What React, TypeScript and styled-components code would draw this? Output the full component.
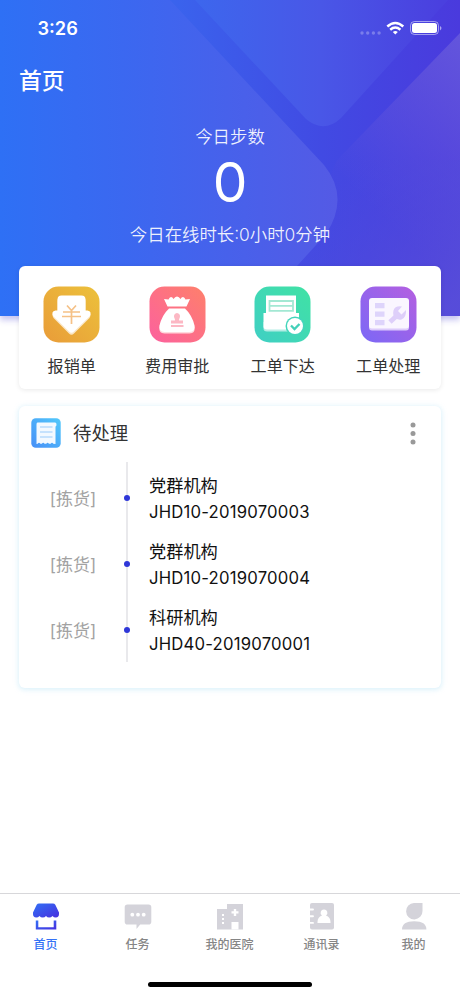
import React from 'react';
import styled, { createGlobalStyle } from 'styled-components';

const GlobalStyle = createGlobalStyle`
  * { box-sizing: border-box; }
  body {
    margin: 0;
    background: #fff;
    font-family: Inter, "Noto Sans CJK SC", sans-serif;
    color: #111;
  }
`;

const Screen = styled.div`
  display: flex;
  flex-direction: column;
  width: 460px;
  height: 996px;
  overflow: hidden;
  background: #fff;
`;

const Hero = styled.header`
  position: relative;
  flex: none;
  height: 316px;
  color: #fff;
  box-shadow: 0 4px 6px rgba(80, 70, 210, 0.32);
`;

const HeroArt = styled.svg`
  position: absolute;
  inset: 0;
  display: block;
`;

const HeroContent = styled.div`
  position: relative;
  display: flex;
  flex-direction: column;
`;

const StatusBar = styled.div`
  display: flex;
  align-items: center;
  justify-content: space-between;
  height: 57px;
  padding: 0 17px 0 37.5px;
`;

const Clock = styled.span`
  margin-top: -2px;
  font-size: 18.2px;
  font-weight: 600;
  line-height: 24px;
`;

const PageTitle = styled.h1`
  margin: 8px 0 0 19px;
  font-size: 22.8px;
  font-weight: 500;
  line-height: 32px;
`;

const Stats = styled.div`
  display: flex;
  flex-direction: column;
  align-items: center;
  padding-top: 27px;
`;

const StatLine = styled.div`
  font-size: 17.4px;
  font-weight: 350;
  line-height: 26px;
  color: rgba(255, 255, 255, 0.92);
  white-space: nowrap;
`;

const StepCount = styled.div`
  margin: 2px 0 9px;
  font-size: 55px;
  font-weight: 400;
  line-height: 61px;
`;

const Card = styled.section`
  position: relative;
  flex: none;
  width: 422px;
  margin: 0 auto;
  border-radius: 6px;
  background: #fff;
`;

const ShortcutCard = styled(Card)`
  display: grid;
  grid-template-columns: repeat(4, 105.5px);
  height: 123px;
  margin-top: -50px;
  padding-top: 19.5px;
  box-shadow: 0 1px 5px rgba(0, 0, 0, 0.09);
`;

const Shortcut = styled.div`
  display: flex;
  flex-direction: column;
  align-items: center;
  gap: 11px;
  font-size: 16.1px;
  line-height: 24px;
  color: #333;
  svg { display: block; }
`;

const TodoCard = styled(Card)`
  height: 282px;
  margin-top: 17px;
  box-shadow: 0 1px 5px 1px rgba(160, 218, 245, 0.36);
`;

const CardHeader = styled.div`
  display: flex;
  align-items: center;
  height: 54px;
  padding: 0 23px 0 12px;
`;

const CardTitle = styled.h2`
  flex: 1;
  margin: -1px 0 0 12px;
  font-size: 18.4px;
  font-weight: 400;
  line-height: 28px;
  color: #333;
`;

const Timeline = styled.div`
  display: flex;
  flex-direction: column;
  height: 203px;
  margin-top: 2px;
  padding-top: 3px;
  background: linear-gradient(#e9e9ec, #e9e9ec) 107px 0 / 2px 200px no-repeat;
`;

const TaskRow = styled.div`
  display: grid;
  grid-template-columns: 108px 22px 1fr;
  align-items: center;
  height: 66.2px;
`;

const TaskTag = styled.span`
  padding-top: 1px;
  text-align: center;
  font-size: 17px;
  line-height: 26px;
  color: #a2a2a2;
`;

const TaskDot = styled.span`
  width: 6px;
  height: 6px;
  margin-left: -3px;
  border-radius: 50%;
  background: #2f37d8;
`;

const TaskText = styled.div`
  padding-top: 2px;
  font-size: 17.2px;
  line-height: 26px;
  color: #111;
`;

const TaskNumber = styled.div`
  font-size: 16.7px;
  letter-spacing: 0.2px;
`;

const TabBar = styled.nav`
  display: grid;
  grid-template-columns: repeat(5, 92px);
  flex: none;
  height: 78px;
  margin-top: auto;
  margin-left: -0.5px;
  border-top: 1px solid #d7d7da;
  padding-top: 8px;
`;

const Tab = styled.div<{ $active?: boolean }>`
  display: flex;
  flex-direction: column;
  align-items: center;
  gap: 4px;
  font-size: 12px;
  font-weight: 500;
  line-height: 18px;
  color: ${({ $active }) => ($active ? '#3472f6' : '#858585')};
  svg { display: block; }
`;

const HomeArea = styled.div`
  display: flex;
  justify-content: center;
  flex: none;
  height: 25px;
  padding-top: 10.5px;
`;

const HomeIndicator = styled.div`
  width: 164px;
  height: 5px;
  border-radius: 3px;
  background: #000;
`;

const HeroBackground = () => (
  <HeroArt width="460" height="316" viewBox="0 0 460 316">
    <defs>
      <linearGradient id="base" x1="0" y1="0" x2="460" y2="0" gradientUnits="userSpaceOnUse">
        <stop offset="0" stopColor="#2e70f5" />
        <stop offset=".38" stopColor="#3a63ed" />
        <stop offset=".7" stopColor="#414ae3" />
        <stop offset="1" stopColor="#4a3add" />
      </linearGradient>
      <linearGradient id="leftPanel" x1="0" y1="0" x2="337" y2="0" gradientUnits="userSpaceOnUse">
        <stop offset="0" stopColor="#2e70f5" />
        <stop offset=".45" stopColor="#3e66ef" />
        <stop offset="1" stopColor="#545ae5" />
      </linearGradient>
      <linearGradient id="topPanel" x1="200" y1="0" x2="440" y2="0" gradientUnits="userSpaceOnUse">
        <stop offset="0" stopColor="#3d66ed" />
        <stop offset=".5" stopColor="#4957e7" />
        <stop offset="1" stopColor="#4a40df" />
      </linearGradient>
      <linearGradient id="rightPanel" x1="345" y1="180" x2="475" y2="50" gradientUnits="userSpaceOnUse">
        <stop offset="0" stopColor="#6658dc" stopOpacity="0" />
        <stop offset="1" stopColor="#6658dc" stopOpacity=".9" />
      </linearGradient>
      <linearGradient id="lower" x1="320" y1="200" x2="440" y2="316" gradientUnits="userSpaceOnUse">
        <stop offset="0" stopColor="#4d48dd" stopOpacity=".2" />
        <stop offset="1" stopColor="#584ed9" stopOpacity=".9" />
      </linearGradient>
    </defs>
    <path fill="url(#base)" d="M0 0h460v316H0z" />
    <path fill="url(#rightPanel)" d="M460 33 340 157Q328 170 337 190V316H460Z" />
    <path fill="url(#lower)" d="M337 160H460V316H290V266Z" />
    <path fill="url(#leftPanel)" d="M0 0H170L324 165Q350 197 326 234L297 266V316H0Z" />
    <path fill="url(#topPanel)" d="M195 0H448L341 118Q324 134 306 119Z" />
  </HeroArt>
);

const StatusIcons = () => (
  <svg width="86" height="20" viewBox="0 0 86 20">
    <g fill="#fff" fillOpacity=".27">
      <circle cx="5" cy="14" r="1.7" />
      <circle cx="10.7" cy="14" r="1.7" />
      <circle cx="16.4" cy="14" r="1.7" />
      <circle cx="22.1" cy="14" r="1.7" />
    </g>
    <g fill="none" stroke="#fff" strokeWidth="2.5">
      <path d="M30.3 7.500q8-7 16 0" />
      <path d="M33.2 10.700q5.100-4.300 10.200 0" />
    </g>
    <path fill="#fff" d="M35.800 13q2.500-2 5 0l-2.500 2.500z" />
    <rect x="53.5" y="2.500" width="28" height="13" rx="4" fill="none" stroke="#fff" strokeOpacity=".5" />
    <rect x="55" y="4" width="25" height="10" rx="2.500" fill="#fff" />
    <path fill="#fff" fillOpacity=".55" d="M83 7q3 2 0 4.400z" />
  </svg>
);

const Tile = ({ id, from, to, children }: { id: string; from: string; to: string; children: React.ReactNode }) => (
  <svg width="57" height="57" viewBox="0 0 57 57">
    <defs>
      <linearGradient id={id} x1="0" y1="1" x2="1" y2="0">
        <stop offset="0" stopColor={from} />
        <stop offset="1" stopColor={to} />
      </linearGradient>
    </defs>
    <rect x=".5" y=".5" width="56" height="56" rx="15" fill={`url(#${id})`} />
    {children}
  </svg>
);

const ExpenseIcon = () => (
  <Tile id="gold" from="#e99c39" to="#ecc13b">
    <path fill="#fae6c6" d="M18.5 11h20q4 0 4 4v11h2q5 1 2 6L31 47.500q-2.500 2.500-5 0L10.500 32q-3-5 2-6h2V15q0-4 4-4Z" />
    <path fill="#fff" d="M18.5 9.500h20q4 0 4 4V24.500h2q5 1 2 6L31 45.500q-2.500 2.500-5 0L10.500 30.500q-3-5 2-6h2v-11q0-4 4-4Z" />
    <g stroke="#f5c187" strokeWidth="1.700" fill="none">
      <path d="m24 19.500 4.500 5 4.500-5M28.500 24.500v13.500M20 26h17M19 30.500h19" />
    </g>
  </Tile>
);

const ApprovalIcon = () => (
  <Tile id="pink" from="#fc619e" to="#fe806b">
    <path fill="#ffdade" d="M20 24Q13 31 10.500 41q-1 6.500 5 6.500h25q6 0 5-6.500Q43 31 36 24Z" />
    <path fill="#fff" d="M20 22.500Q13 29 10.500 39.500q-1 6.500 5 6.500h25q6 0 5-6.500Q43 29 36 22.500Z" />
    <path fill="#fff" d="m15 13 4.500.5q1-2.500 2.500-2.500t2.500 2q1.500-2.500 3.500-2.500t3.500 2.500q1-2 2.500-2t2.500 2.500l4.500-.5-3.500 7.500H18.500Z" />
    <path fill="#fcb8c4" d="M28 27a3.300 3.300 0 0 1 2.800 4.500q-1 2-.8 3h4v3H22v-3h4q.2-1-.8-3A3.300 3.300 0 0 1 28 27ZM22 39h12.500v2H22Z" />
  </Tile>
);

const IssueIcon = () => (
  <Tile id="green" from="#40cfc4" to="#40e2a4">
    <path fill="#fff" d="M12 9.500h30v27H12Z" />
    <path fill="none" stroke="#a3e8d3" strokeWidth="1.800" d="M15.500 15h23.500v9.800H15.500ZM15.500 19.900H39" />
    <path fill="#b5ece5" d="M9.500 36h33v9.500H13q-3.500 0-3.500-3Z" />
    <path fill="#fff" d="M9.500 27H45v16.500H13q-3.500 0-3.500-3Z" />
    <circle cx="41" cy="40" r="9.500" fill="#43d5bb" />
    <circle cx="41" cy="40" r="8" fill="#fff" />
    <path fill="none" stroke="#43d0b9" strokeWidth="2.300" d="m37 39.500 3.500 3.500 5-5" />
  </Tile>
);

const ProcessIcon = () => (
  <Tile id="purple" from="#7b68f6" to="#b45fe0">
    <rect x="9" y="13.500" width="40" height="31" rx="3" fill="#dccbfb" />
    <rect x="9" y="12" width="40" height="30.500" rx="3" fill="#faf6ff" />
    <path fill="#ded4fb" d="M15 17h9.500v5.300H15ZM15 25.500h9.500v5.300H15ZM15 34h9.500v5.300H15Z" />
    <path stroke="#decffa" strokeWidth="4.800" d="m30 36 7-6.500" />
    <path fill="#decffa" d="M42 20.500q-7-1-8.500 4-1 4 1 6.500 3 3.500 7 2.500 5-2 4.500-9.500l-4.500 4.500-3.500-3.500Z" />
  </Tile>
);

const ReceiptIcon = () => (
  <svg width="30" height="30" viewBox="0 0 30 30">
    <defs>
      <linearGradient id="blue" x1="0" y1="1" x2="1" y2="0">
        <stop offset="0" stopColor="#478ff7" />
        <stop offset="1" stopColor="#52c9fb" />
      </linearGradient>
    </defs>
    <rect x=".3" y=".3" width="29.400" height="29.400" rx="4.500" fill="url(#blue)" />
    <path fill="#f3f9ff" d="M6.500 4.500h17.500q1.500 0 1.500 2t-1 2V26l-2.200-.2q-1.300-2.300-2.600 0h-1.800q-1.300-2.300-2.600 0h-1.800q-1.300-2.300-2.600 0H9.300q-1.300-2.300-2.600 0L5.500 26V6.500q0-2 1-2Z" />
    <path stroke="#b8dafd" strokeWidth="1.600" d="M9 9h12.500M9 14h12.500M9 19h12.500" />
  </svg>
);

const MoreIcon = () => (
  <svg width="10" height="26" viewBox="0 0 10 26" fill="#999">
    <circle cx="5" cy="5" r="2.500" />
    <circle cx="5" cy="13.500" r="2.500" />
    <circle cx="5" cy="22" r="2.500" />
  </svg>
);

const TabIcon = ({ children }: { children: React.ReactNode }) => (
  <svg width="28" height="30" viewBox="0 0 28 30" fill="#d4d3da">{children}</svg>
);

const tabs = [
  {
    label: '首页',
    icon: (
      <TabIcon>
        <defs>
          <linearGradient id="shop" x1="0" y1="0" x2="1" y2="1">
            <stop offset="0" stopColor="#3270f5" />
            <stop offset="1" stopColor="#4730df" />
          </linearGradient>
        </defs>
        <path fill="url(#shop)" d="M7 1.500h14q1.500 0 2.300 1.200L27 10.500v1.500q0 3.300-3.200 3.500-2 0-3.300-1.600-1.300 1.700-3.300 1.700T14 13.900q-1.300 1.700-3.300 1.700t-3.200-1.700Q6.200 15.500 4.200 15.500 1 15.300 1 12v-1.500L4.700 2.700Q5.500 1.500 7 1.500Z" />
        <path fill="url(#shop)" d="M3.800 18.500h2.500v6.700h15.400v-6.700h2.600v9H3.800Z" />
      </TabIcon>
    ),
  },
  {
    label: '任务',
    icon: (
      <TabIcon>
        <path d="M3.500 2.500h21q2.800 0 2.800 2.800v14.400q0 2.800-2.800 2.800h-8.300L12.500 27v-4.500h-9Q.7 22.500.7 19.700V5.300q0-2.800 2.800-2.800Z" />
        <g fill="#fff">
          <circle cx="8.300" cy="12.700" r="1.900" />
          <circle cx="14" cy="12.700" r="1.900" />
          <circle cx="19.700" cy="12.700" r="1.900" />
        </g>
      </TabIcon>
    ),
  },
  {
    label: '我的医院',
    icon: (
      <TabIcon>
        <path d="M1 7h10V2h16v25.500H1Z" />
        <path fill="#fff" d="M17.800 7h2.400v2.200h2.300v2.400h-2.300v2.300h-2.400v-2.300h-2.300V9.200h2.300ZM15.500 20h7v7.500h-7ZM6 12h2v2H6ZM6 16h2v2H6ZM6 20h2v2H6Z" />
      </TabIcon>
    ),
  },
  {
    label: '通讯录',
    icon: (
      <TabIcon>
        <path d="M4 1h20q2 0 2 2v22.500q0 2-2 2H4q-2 0-2-2V3q0-2 2-2Z" />
        <g fill="none" stroke="#fff" strokeWidth="1.900" strokeLinecap="round">
          <path d="M1 7.500h4M1 14.200h4M1 20.900h4" />
        </g>
        <path fill="#fff" d="M16 7.500a3.300 3.300 0 0 1 2 6q4.500 1.500 4.500 6.500v1h-13v-1q0-5 4.500-6.500a3.300 3.300 0 0 1 2-6Z" />
      </TabIcon>
    ),
  },
  {
    label: '我的',
    icon: (
      <TabIcon>
        <path d="M14 1h8.500v8A8.200 8.200 0 1 1 14 1ZM2 27.500q0-8.300 12.200-8.300t12.200 8.300Z" />
      </TabIcon>
    ),
  },
];

const shortcuts = [
  { label: '报销单', icon: <ExpenseIcon /> },
  { label: '费用审批', icon: <ApprovalIcon /> },
  { label: '工单下达', icon: <IssueIcon /> },
  { label: '工单处理', icon: <ProcessIcon /> },
];

const tasks = [
  { name: '党群机构', number: 'JHD10-2019070003' },
  { name: '党群机构', number: 'JHD10-2019070004' },
  { name: '科研机构', number: 'JHD40-2019070001' },
];

export default function App() {
  return (
    <Screen>
      <GlobalStyle />
      <Hero>
        <HeroBackground />
        <HeroContent>
          <StatusBar>
            <Clock>3:26</Clock>
            <StatusIcons />
          </StatusBar>
          <PageTitle>首页</PageTitle>
          <Stats>
            <StatLine>今日步数</StatLine>
            <StepCount>0</StepCount>
            <StatLine>今日在线时长:0小时0分钟</StatLine>
          </Stats>
        </HeroContent>
      </Hero>
      <ShortcutCard>
        {shortcuts.map(({ label, icon }) => (
          <Shortcut key={label}>{icon}{label}</Shortcut>
        ))}
      </ShortcutCard>
      <TodoCard>
        <CardHeader>
          <ReceiptIcon />
          <CardTitle>待处理</CardTitle>
          <MoreIcon />
        </CardHeader>
        <Timeline>
          {tasks.map(({ name, number }) => (
            <TaskRow key={number}>
              <TaskTag>[拣货]</TaskTag>
              <TaskDot />
              <TaskText>
                {name}
                <TaskNumber>{number}</TaskNumber>
              </TaskText>
            </TaskRow>
          ))}
        </Timeline>
      </TodoCard>
      <TabBar>
        {tabs.map(({ label, icon }, index) => (
          <Tab key={label} $active={index === 0}>{icon}{label}</Tab>
        ))}
      </TabBar>
      <HomeArea>
        <HomeIndicator />
      </HomeArea>
    </Screen>
  );
}
